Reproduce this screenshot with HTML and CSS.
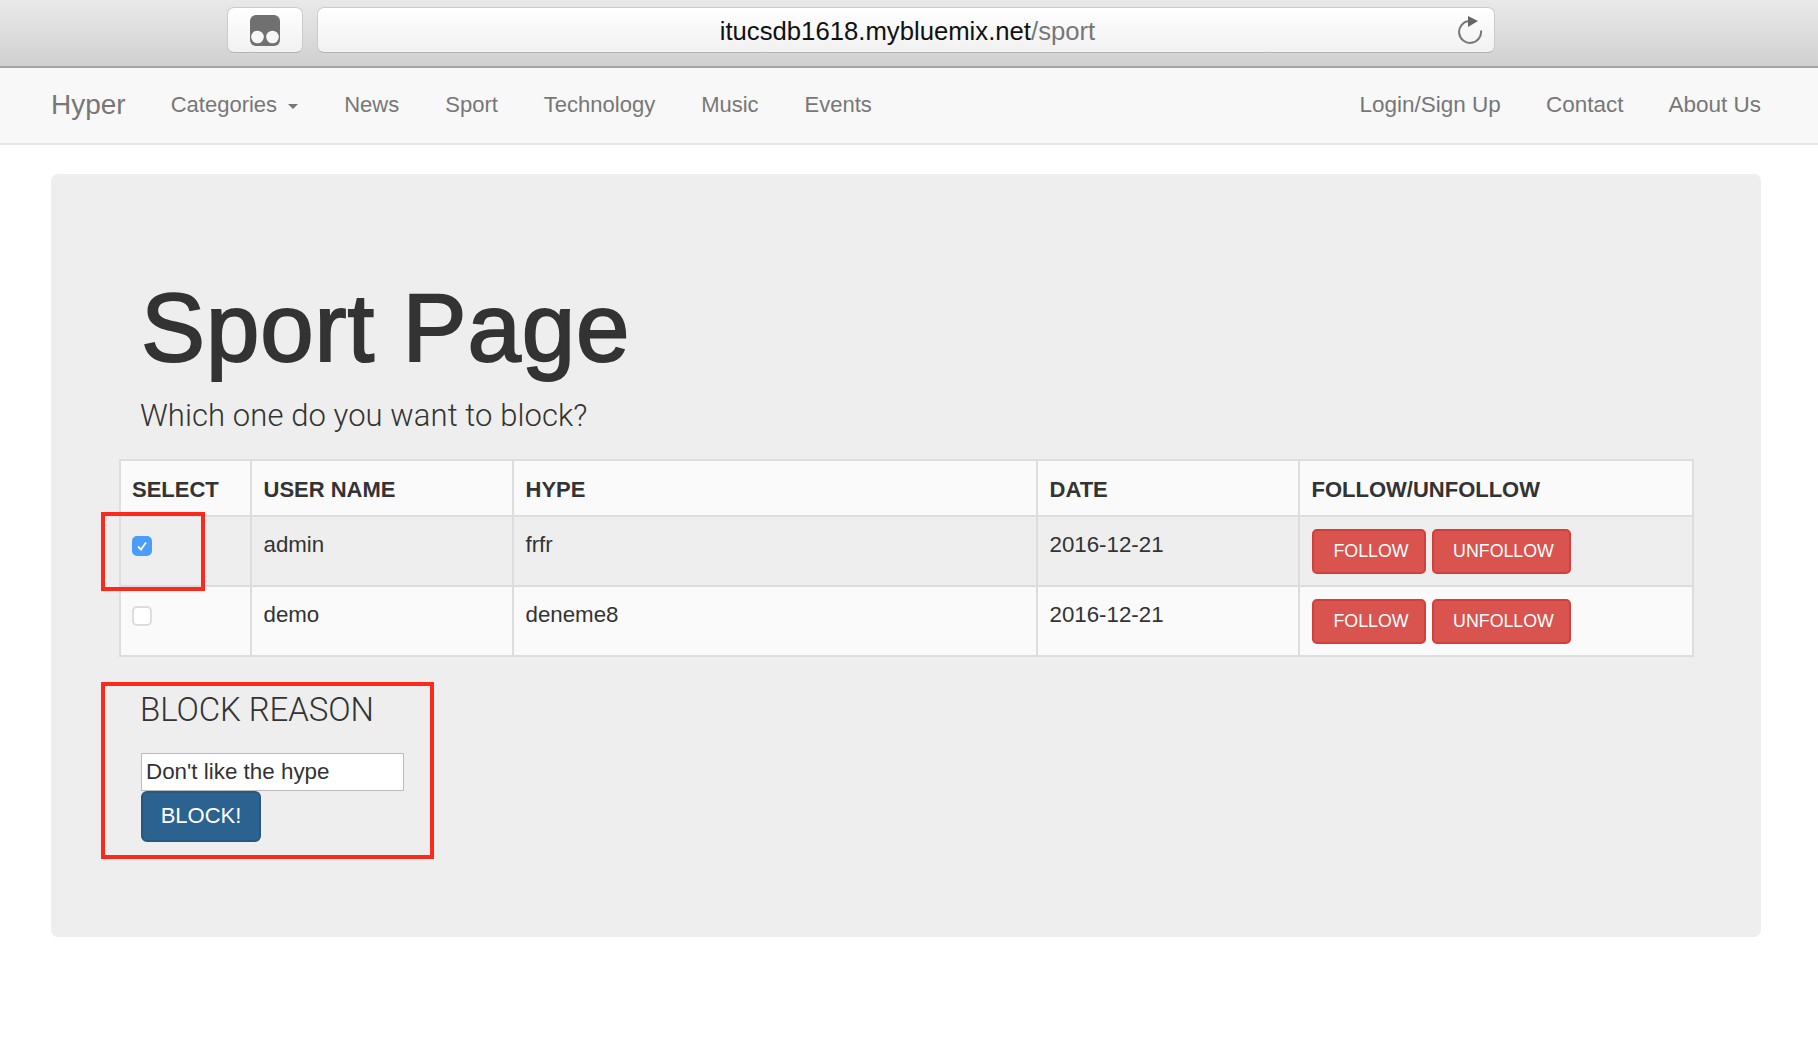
FILE: index.html
```html
<!DOCTYPE html>
<html lang="en">
    <head>
        <meta charset="UTF-8">
        <title>Sport Page</title>
        <link rel="stylesheet" href="styles.css">
    </head>
    <body>
        <div class="browser-bar">
            <div class="ext-button">
                <svg width="30" height="31" viewBox="0 0 30 31">
                    <rect width="30" height="31" rx="6" fill="#707070"/>
                    <circle cx="7.5" cy="22" r="6.3" fill="#f6f6f6"/>
                    <circle cx="22.5" cy="22" r="6.3" fill="#f6f6f6"/>
                </svg>
            </div>
            <div class="address-bar">
                <span class="url">itucsdb1618.mybluemix.net<span class="url-path">/sport</span></span>
                <svg class="reload" width="26" height="30" viewBox="0 0 26 30">
                    <path d="M11 7A11 11 0 1 0 23 16.5" fill="none" stroke="#777" stroke-width="2"/>
                    <path d="M10 2l10 5-10 6z" fill="#666"/>
                </svg>
            </div>
        </div>

        <nav class="navbar">
            <a class="brand" href="#">Hyper</a>
            <ul class="nav-links nav-left">
                <li><a href="#">Categories <span class="caret"></span></a></li>
                <li><a href="#">News</a></li>
                <li><a href="#">Sport</a></li>
                <li><a href="#">Technology</a></li>
                <li><a href="#">Music</a></li>
                <li><a href="#">Events</a></li>
            </ul>
            <ul class="nav-links nav-right">
                <li><a href="#">Login/Sign Up</a></li>
                <li><a href="#">Contact</a></li>
                <li><a href="#">About Us</a></li>
            </ul>
        </nav>

        <div class="jumbotron">
            <h1>Sport Page</h1>
            <p class="lead">Which one do you want to block?</p>

            <table class="hype-table">
                <thead>
                    <tr>
                        <th class="col-select">SELECT</th>
                        <th class="col-user">USER NAME</th>
                        <th class="col-hype">HYPE</th>
                        <th class="col-date">DATE</th>
                        <th>FOLLOW/UNFOLLOW</th>
                    </tr>
                </thead>
                <tbody>
                    <tr class="striped">
                        <td><span class="check checked">
                            <svg width="12" height="12" viewBox="0 0 12 12"><path d="M2 6.5l3 3 5-7" fill="none" stroke="#fff" stroke-width="1.8"/></svg>
                        </span></td>
                        <td>admin</td>
                        <td>frfr</td>
                        <td>2016-12-21</td>
                        <td class="actions"><button class="btn-red btn-follow">FOLLOW</button><button class="btn-red btn-unfollow">UNFOLLOW</button></td>
                    </tr>
                    <tr>
                        <td><span class="check"></span></td>
                        <td>demo</td>
                        <td>deneme8</td>
                        <td>2016-12-21</td>
                        <td class="actions"><button class="btn-red btn-follow">FOLLOW</button><button class="btn-red btn-unfollow">UNFOLLOW</button></td>
                    </tr>
                </tbody>
            </table>

            <div class="block-form">
                <h3>BLOCK REASON</h3>
                <input class="reason" type="text" value="Don't like the hype">
                <button class="btn-block">BLOCK!</button>
            </div>

            <!-- red annotation boxes drawn over the screenshot -->
            <div class="mark mark-check"></div>
            <div class="mark mark-form"></div>
        </div>
    </body>
</html>
```

FILE: styles.css
```css
* {
    box-sizing: border-box;
}
body {
    font-family: "Liberation Sans", Arial, sans-serif;
    margin: 0;
    padding: 0;
    background: white;
    color: #333;
    height: 1053px;
    overflow: hidden;
}
.browser-bar {
    height: 68px;
    background: linear-gradient(#e9e9e9, #d0d0d0);
    border-bottom: 2px solid #a3a3a3;
    display: flex;
    align-items: flex-start;
    padding: 7px 0 0 227px;
    gap: 14px;
}
.ext-button {
    width: 76px;
    height: 46px;
    background: linear-gradient(#fff, #f1f1f1);
    border: 1px solid #ccc;
    border-bottom-color: #b4b4b4;
    border-radius: 7px;
    display: flex;
    align-items: center;
    justify-content: center;
}
.address-bar {
    position: relative;
    width: 1178px;
    height: 46px;
    background: linear-gradient(#fff, #f1f1f1);
    border: 1px solid #ccc;
    border-bottom-color: #b4b4b4;
    border-radius: 7px;
    display: flex;
    align-items: center;
    justify-content: center;
    padding: 2px 0 0 3px;
}
.url {
    font-size: 25.7px;
    color: #111;
}
.url-path {
    color: #777;
}
.reload {
    position: absolute;
    right: 10px;
    top: 6px;
}
.navbar {
    height: 77px;
    background: #f8f8f8;
    border-bottom: 2px solid #e7e7e7;
    display: flex;
    align-items: center;
    padding: 0 57px 2px 51px;
}
.navbar a {
    color: #777;
    text-decoration: none;
}
.brand {
    font-size: 28px;
    margin-right: 45px;
}
.nav-links {
    list-style: none;
    margin: 0;
    padding: 0;
    display: flex;
    font-size: 22px;
}
.nav-left {
    gap: 46px;
    margin-top: 1px;
}
.nav-right {
    gap: 45px;
    margin-left: auto;
    font-size: 22.5px;
}
.caret {
    display: inline-block;
    width: 0;
    height: 0;
    margin-left: 5px;
    vertical-align: middle;
    border-top: 5px solid #777;
    border-left: 5px solid transparent;
    border-right: 5px solid transparent;
}
.jumbotron {
    position: relative;
    margin: 29px 57px 0 51px;
    height: 763px;
    background: #eee;
    border-radius: 7px;
    padding: 101px 68px 0;
}
h1 {
    font-size: 96px;
    font-weight: 500;
    line-height: 1.1;
    margin: 0 0 0 22px;
    letter-spacing: 0.9px;
    -webkit-text-stroke: 2px #333;
}
.lead {
    font-family: Roboto, "Liberation Sans", sans-serif;
    font-size: 31px;
    font-weight: 300;
    line-height: 37px;
    margin: 16px 0 25px 21px;
    letter-spacing: 0.08px;
}
.hype-table {
    width: 1575px;
    border-collapse: collapse;
    table-layout: fixed;
    background: #fafafa;
    font-size: 22.3px;
}
.hype-table th,
.hype-table td {
    border: 2px solid #ddd;
    padding: 15px 11.5px 0;
    text-align: left;
    vertical-align: top;
}
.hype-table th:first-child,
.hype-table td:first-child {
    padding-left: 11px;
}
.hype-table th {
    height: 56px;
    padding-top: 16px;
    font-weight: bold;
    font-size: 22px;
    color: #333;
}
.hype-table td {
    height: 70px;
    color: #333;
}
.col-select {
    width: 131px;
}
.col-user {
    width: 262px;
}
.col-hype {
    width: 524px;
}
.col-date {
    width: 262px;
}
.striped {
    background: #eee;
}
.check {
    display: block;
    width: 20px;
    height: 20px;
    border: 2px solid #ddd;
    border-radius: 5px;
    background: white;
    margin-top: 4px;
}
.check.checked {
    background: #4a9df8;
    border-color: #4a9df8;
    display: flex;
    align-items: center;
    justify-content: center;
}
.hype-table td.actions {
    padding: 12px 12px 0;
}
.btn-red {
    height: 45px;
    font-family: inherit;
    font-size: 17.8px;
    color: white;
    background: #d9534f;
    border: 2px solid #d43f3a;
    border-radius: 5px;
    padding: 1px 0 0 4px;
    margin-right: 6px;
}
.btn-follow {
    width: 114px;
}
.btn-unfollow {
    width: 139px;
}
.block-form {
    padding: 0 0 0 22px;
}
.block-form h3 {
    font-family: Roboto, "Liberation Sans", sans-serif;
    font-size: 33px;
    font-weight: 300;
    line-height: 36px;
    margin: 35px 0 25px -1px;
    letter-spacing: -0.1px;
}
.reason {
    display: block;
    width: 263px;
    height: 38px;
    font-family: inherit;
    font-size: 22.4px;
    color: #333;
    border: 1px solid #bbb;
    padding: 0 4px;
    background: white;
}
.btn-block {
    display: block;
    width: 120px;
    height: 51px;
    font-family: inherit;
    font-size: 22px;
    color: white;
    background: #2c6290;
    border: 2px solid #285880;
    border-radius: 6px;
    padding: 0;
}
.mark {
    position: absolute;
    border: 4px solid #fc2a1c;
}
.mark-check {
    left: 50px;
    top: 338px;
    width: 104px;
    height: 79px;
}
.mark-form {
    left: 50px;
    top: 508px;
    width: 333px;
    height: 177px;
}
```
